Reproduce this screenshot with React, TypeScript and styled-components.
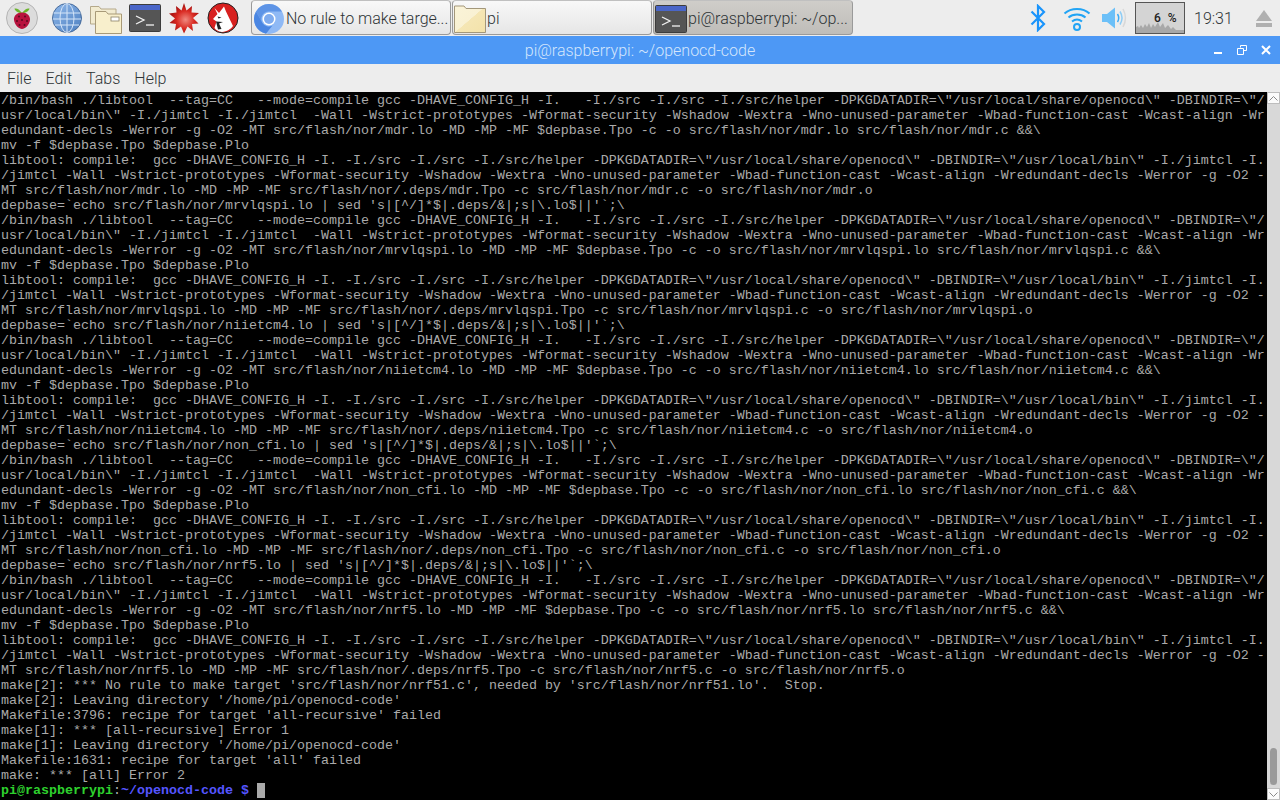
import React, { FC } from "react";
import styled, { createGlobalStyle } from "styled-components";

const GlobalStyle = createGlobalStyle`
  html, body {
    margin: 0;
    padding: 0;
    height: 100%;
    overflow: hidden;
    background: #000;
  }
`;

const COLS = 158;

const compileBlock = (name: string): string[] => {
    const src = `src/flash/nor/${name}`;
    return [
        `/bin/bash ./libtool  --tag=CC   --mode=compile gcc -DHAVE_CONFIG_H -I.   -I./src -I./src -I./src/helper -DPKGDATADIR=\\"/usr/local/share/openocd\\" -DBINDIR=\\"/usr/local/bin\\" -I./jimtcl -I./jimtcl  -Wall -Wstrict-prototypes -Wformat-security -Wshadow -Wextra -Wno-unused-parameter -Wbad-function-cast -Wcast-align -Wredundant-decls -Werror -g -O2 -MT ${src}.lo -MD -MP -MF $depbase.Tpo -c -o ${src}.lo ${src}.c &&\\`,
        `mv -f $depbase.Tpo $depbase.Plo`,
        `libtool: compile:  gcc -DHAVE_CONFIG_H -I. -I./src -I./src -I./src/helper -DPKGDATADIR=\\"/usr/local/share/openocd\\" -DBINDIR=\\"/usr/local/bin\\" -I./jimtcl -I./jimtcl -Wall -Wstrict-prototypes -Wformat-security -Wshadow -Wextra -Wno-unused-parameter -Wbad-function-cast -Wcast-align -Wredundant-decls -Werror -g -O2 -MT ${src}.lo -MD -MP -MF src/flash/nor/.deps/${name}.Tpo -c ${src}.c -o ${src}.o`,
    ];
};

const depbase = (name: string) => `depbase=\`echo src/flash/nor/${name}.lo | sed 's|[^/]*$|.deps/&|;s|\\.lo$||'\`;\\`;

const logical: string[] = [
    ...compileBlock("mdr"),
    depbase("mrvlqspi"),
    ...compileBlock("mrvlqspi"),
    depbase("niietcm4"),
    ...compileBlock("niietcm4"),
    depbase("non_cfi"),
    ...compileBlock("non_cfi"),
    depbase("nrf5"),
    ...compileBlock("nrf5"),
    `make[2]: *** No rule to make target 'src/flash/nor/nrf51.c', needed by 'src/flash/nor/nrf51.lo'.  Stop.`,
    `make[2]: Leaving directory '/home/pi/openocd-code'`,
    `Makefile:3796: recipe for target 'all-recursive' failed`,
    `make[1]: *** [all-recursive] Error 1`,
    `make[1]: Leaving directory '/home/pi/openocd-code'`,
    `Makefile:1631: recipe for target 'all' failed`,
    `make: *** [all] Error 2`,
];

// the terminal wraps hard at the column limit, mid word
const rows: string[] = logical.flatMap((line) => {
    const out: string[] = [];
    for (let i = 0; i < line.length; i += COLS) out.push(line.slice(i, i + COLS));
    return out;
});

const Raspberry: FC = () => (
    <svg width="32" height="32" viewBox="0 0 32 32">
        <circle cx="16" cy="16" r="15.500" fill="#dcdcdc" stroke="#b4b4b4" />
        <path d="M16 11C13 7 11 6 8.500 6.500C9 9 12 11 16 11ZM16 11C19 7 21 6 23.500 6.500C23 9 20 11 16 11Z" fill="#6cb52d" />
        <path d="M16 10.500C21 10.500 24.500 14 24 18C23.500 23 19 27 16 27C13 27 8.500 23 8 18C7.500 14 11 10.500 16 10.500Z" fill="#b8123e" />
        <g fill="#5a0a20">
            <circle cx="13" cy="14.500" r="1" />
            <circle cx="19" cy="14.500" r="1" />
            <circle cx="16" cy="18" r="1" />
            <circle cx="11" cy="19" r="1" />
            <circle cx="21" cy="19" r="1" />
            <circle cx="13.500" cy="23" r="1" />
            <circle cx="18.500" cy="23" r="1" />
        </g>
    </svg>
);

const Globe: FC = () => (
    <svg width="32" height="32" viewBox="0 0 32 32">
        <defs>
            <linearGradient id="globeFill" x1="0" y1="0" x2="1" y2="1">
                <stop offset="0" stopColor="#8fb8ea" />
                <stop offset="1" stopColor="#4d7fc0" />
            </linearGradient>
        </defs>
        <circle cx="16" cy="16" r="14.500" fill="url(#globeFill)" stroke="#4a6d9c" />
        <g fill="none" stroke="#d5e5f8" strokeWidth="1">
            <ellipse cx="16" cy="16" rx="7" ry="14.500" />
            <path d="M16 1.500V30.500M2.500 11H29.500M2 17H30M4 23H28" />
        </g>
    </svg>
);

const Folders: FC = () => (
    <svg width="32" height="32" viewBox="0 0 32 32">
        <path d="M0.500 4.500H9L11 7H26V22H0.500Z" fill="#f2ebd0" stroke="#b5a98a" />
        <path d="M5.500 13V31.500H31.500V12H18L16 9.500H5.500Z" fill="#f8efcc" stroke="#a89a78" />
        <rect x="21" y="15" width="8" height="4" fill="#fff" stroke="#8c8268" strokeWidth="0.800" />
    </svg>
);

const TermIcon: FC = () => (
    <svg width="32" height="28" viewBox="0 0 32 28">
        <rect x="0.500" y="0.500" width="31" height="27" rx="1" fill="#555" stroke="#3c3c3c" />
        <rect x="1" y="1" width="30" height="5" fill="#4a66c8" />
        <path d="M7 12L15 16L7 20" fill="none" stroke="#f2f2f2" strokeWidth="1.300" />
        <path d="M17 21H25" stroke="#f2f2f2" strokeWidth="1.300" />
    </svg>
);

const Spikey: FC = () => (
    <svg width="32" height="32" viewBox="0 0 32 32">
        <defs>
            <radialGradient id="spikeFill" cx="0.550" cy="0.550" r="0.500">
                <stop offset="0" stopColor="#f08a80" />
                <stop offset="0.600" stopColor="#d92a22" />
                <stop offset="1" stopColor="#a81210" />
            </radialGradient>
        </defs>
        <path d="M16 1L18.500 8.500L24 4L23.500 10.500L31 11L25 16L30.500 21.500L24 22L25 29L19.500 24.500L16 31.500L13 24.500L7 28.500L8 22L1.500 21L7 16.500L1 11.500L8.500 10.500L8 4L13.500 8.500Z" fill="url(#spikeFill)" />
    </svg>
);

const Wolf: FC = () => (
    <svg width="32" height="32" viewBox="0 0 32 32">
        <circle cx="16" cy="16" r="15" fill="#d8201f" stroke="#222" />
        <path d="M7.500 6L12 11L17 4.500L19 9.500L26 24C24 27 20 29.500 15 30C11 29.500 9 28 7.500 26L9.500 19.500L6 17L10.500 12Z" fill="#fff" />
        <path d="M10.500 14.500L14.500 15.500L11.500 16.500ZM9 19.500L16 20L12 21.500L14.500 27L11 27.500Z" fill="#222" />
    </svg>
);

const ChromeIcon: FC = () => (
    <svg width="32" height="32" viewBox="0 0 32 32">
        <circle cx="16" cy="16" r="15" fill="#8fb9f5" />
        <path d="M16 1A15 15 0 0 0 3 8.500L9.500 20A7.500 7.500 0 0 1 16 8.500H29A15 15 0 0 0 16 1Z" fill="#5e94e6" />
        <path d="M3 8.500A15 15 0 0 0 13 30.700L19.500 22.500A7.500 7.500 0 0 1 9.500 20Z" fill="#4a86e2" />
        <circle cx="16" cy="16" r="6.500" fill="#fff" />
        <circle cx="16" cy="16" r="5" fill="#7fabee" />
    </svg>
);

const FolderSingle: FC = () => (
    <svg width="32" height="28" viewBox="0 0 32 28">
        <defs>
            <linearGradient id="folderFill" x1="0" y1="0" x2="1" y2="1">
                <stop offset="0" stopColor="#faf3d8" />
                <stop offset="0.500" stopColor="#f9f1d3" />
                <stop offset="0.510" stopColor="#f5e6b4" />
                <stop offset="1" stopColor="#f3e2aa" />
            </linearGradient>
        </defs>
        <path d="M0.500 1H10L12 3.500H31.500V27.500H0.500Z" fill="url(#folderFill)" stroke="#a3977a" strokeLinejoin="round" />
    </svg>
);

const Bluetooth: FC = () => (
    <svg width="16" height="28" viewBox="0 0 16 28">
        <path d="M1.500 7.500L14 20L8 26V2L14 8L1.500 20.500" fill="none" stroke="#1a94fb" strokeWidth="2.200" />
    </svg>
);

const Wifi: FC = () => (
    <svg width="28" height="26" viewBox="0 0 28 26">
        <g fill="none" stroke="#22a4f5" strokeWidth="2">
            <path d="M1.500 8.500C8 2.500 20 2.500 26.500 8.500" />
            <path d="M5.500 12.500C10 8.500 18 8.500 22.500 12.500" />
            <path d="M9 16.500C12 14 16 14 19 16.500" />
            <circle cx="14" cy="22" r="3" />
        </g>
    </svg>
);

const Speaker: FC = () => (
    <svg width="28" height="26" viewBox="0 0 28 26">
        <path d="M1 9H6L14 2.500V23.500L6 17H1Z" fill="#6cc0f8" />
        <g fill="none" strokeWidth="1.500">
            <path d="M16.500 9C18 11.500 18 14.500 16.500 17" stroke="#3cabf5" />
            <path d="M19 6.500C21.500 10.500 21.500 15.500 19 19.500" stroke="#8fcdf5" />
            <path d="M22 4C25 9.500 25 16.500 22 22" stroke="#d8d8d8" />
        </g>
    </svg>
);

const CpuGraph: FC = () => (
    <GraphSvg viewBox="0 0 48 30" preserveAspectRatio="none">
        <path d="M0 30V24L2 23L3 25L5 22L7 25L9 21L11 24L13 20L15 25L17 21L19 24L22 19L24 24L27 20L29 25L32 22L35 26L37 24L40 27H48V30Z" fill="#a8a8a8" />
    </GraphSvg>
);

const ScrollChevron: FC<{ up?: boolean }> = ({ up }) => (
    <svg width="9" height="5" viewBox="0 0 9 5">
        <path d={up ? "M0.500 4.500L4.500 0.500L8.500 4.500" : "M0.500 0.500L4.500 4.500L8.500 0.500"} fill="none" stroke="#8a8a8a" />
    </svg>
);

const App: FC = () => {
    return (
        <Desktop>
            <GlobalStyle />
            <Panel>
                <Launchers>
                    <Launcher><Raspberry /></Launcher>
                    <Launcher><Globe /></Launcher>
                    <Launcher><Folders /></Launcher>
                    <Launcher><TermIcon /></Launcher>
                    <Launcher><Spikey /></Launcher>
                    <Launcher><Wolf /></Launcher>
                </Launchers>
                <TaskList>
                    <Task>
                        <ChromeIcon />
                        <TaskLabel>No rule to make targe...</TaskLabel>
                    </Task>
                    <Task>
                        <FolderSingle />
                        <TaskLabel>pi</TaskLabel>
                    </Task>
                    <Task $active>
                        <TermIcon />
                        <TaskLabel>pi@raspberrypi: ~/op...</TaskLabel>
                    </Task>
                </TaskList>
                <Tray>
                    <TrayIcon $width={16} $after={17}><Bluetooth /></TrayIcon>
                    <TrayIcon $width={28} $after={10}><Wifi /></TrayIcon>
                    <TrayIcon $width={28} $after={6}><Speaker /></TrayIcon>
                    <CpuMeter>
                        <CpuGraph />
                        <CpuText>6 %</CpuText>
                    </CpuMeter>
                    <Clock>19:31</Clock>
                    <Eject>
                        <EjectArrow />
                        <EjectBar />
                    </Eject>
                </Tray>
            </Panel>

            <TitleBar>
                <Title>pi@raspberrypi: ~/openocd-code</Title>
                <WindowButtons>
                    <svg width="10" height="10" viewBox="0 0 10 10">
                        <rect x="1" y="7" width="8" height="2" fill="#fff" />
                    </svg>
                    <svg width="10" height="10" viewBox="0 0 10 10">
                        <path d="M3.500 2.500V0.500H9.500V5.500H7M0.500 3.500H6.500V9.500H0.500Z" fill="none" stroke="#fff" />
                    </svg>
                    <svg width="10" height="10" viewBox="0 0 10 10">
                        <path d="M1 1L9 9M9 1L1 9" stroke="#fff" strokeWidth="2" />
                    </svg>
                </WindowButtons>
            </TitleBar>

            <MenuBar>
                <MenuItem>File</MenuItem>
                <MenuItem>Edit</MenuItem>
                <MenuItem>Tabs</MenuItem>
                <MenuItem>Help</MenuItem>
            </MenuBar>

            <Body>
                <Terminal>
                    {rows.map((row, i) => (
                        <Row key={i}>{row}</Row>
                    ))}
                    <Row>
                        <PromptUser>pi@raspberrypi</PromptUser>:<PromptPath>~/openocd-code $</PromptPath> <Cursor />
                    </Row>
                </Terminal>
                <Scrollbar>
                    <ScrollButton><ScrollChevron up /></ScrollButton>
                    <ScrollTrack>
                        <ScrollThumb />
                    </ScrollTrack>
                    <ScrollButton><ScrollChevron /></ScrollButton>
                </Scrollbar>
            </Body>
        </Desktop>
    );
};

export default App;

const Desktop = styled.div`
  width: 1280px;
  height: 800px;
  display: flex;
  flex-direction: column;
  overflow: hidden;
  font-family: Roboto, "Liberation Sans", sans-serif;
`;

const Panel = styled.div`
  height: 36px;
  flex: none;
  display: flex;
  align-items: flex-start;
  background: #ededed;
  color: #333;
`;

const Launchers = styled.div`
  display: flex;
  align-items: center;
  gap: 7px;
  height: 36px;
  padding-left: 6px;
  width: 251px;
  box-sizing: border-box;
`;

const Launcher = styled.div`
  width: 32px;
  height: 32px;
  flex: none;
  display: flex;
  align-items: center;

  &:first-child {
    margin-right: 6px;
  }
`;

const TaskList = styled.div`
  display: flex;
  gap: 1px;
  height: 35px;
`;

const Task = styled.div<{ $active?: boolean }>`
  width: 200px;
  height: 35px;
  box-sizing: border-box;
  display: flex;
  align-items: center;
  padding: 2px 0 0 1px;
  gap: 1px;
  border: 1px solid #9a9a9a;
  border-top-color: #c0c0c0;
  border-radius: 4px;
  background: ${(props) =>
        props.$active
            ? "linear-gradient(#cfcdc9, #bfbdb9)"
            : "linear-gradient(#f8f8f8, #e6e6e6)"};

  svg {
    flex: none;
  }
`;

const TaskLabel = styled.span`
  font-size: 16px;
  font-weight: 300;
  color: #2e3436;
  white-space: nowrap;
`;

const Tray = styled.div`
  margin-left: 177px;
  flex: 1;
  display: flex;
  align-items: center;
  height: 36px;
`;

const TrayIcon = styled.div<{ $width: number; $after: number }>`
  width: ${(props) => props.$width}px;
  height: 28px;
  display: flex;
  align-items: center;
  justify-content: center;
  margin-right: ${(props) => props.$after}px;
  flex: none;
`;

const CpuMeter = styled.div`
  position: relative;
  width: 50px;
  height: 32px;
  flex: none;
  box-sizing: border-box;
  border: 1px solid #555;
  background: #d4d4d4;
`;

const GraphSvg = styled.svg`
  display: block;
  width: 100%;
  height: 100%;
`;

const CpuText = styled.span`
  position: absolute;
  left: 18px;
  top: 8px;
  font-size: 12px;
  font-weight: 500;
  word-spacing: 4px;
  color: #222;
`;

const Clock = styled.span`
  margin-left: 9px;
  font-size: 16px;
  font-weight: 300;
  color: #2e3436;
  flex: none;
`;

const Eject = styled.div`
  display: flex;
  flex-direction: column;
  align-items: center;
  gap: 2px;
  width: 16px;
  margin-left: 23px;
  flex: none;
`;

const EjectArrow = styled.div`
  width: 0;
  height: 0;
  border-left: 8px solid transparent;
  border-right: 8px solid transparent;
  border-bottom: 11px solid #b0b0b0;
`;

const EjectBar = styled.div`
  width: 16px;
  height: 4px;
  background: #b0b0b0;
`;

const TitleBar = styled.div`
  position: relative;
  height: 28px;
  flex: none;
  display: flex;
  align-items: center;
  justify-content: center;
  background: #4d98f5;
`;

const Title = styled.span`
  font-size: 16px;
  font-weight: 300;
  color: #d4e6fc;
`;

const WindowButtons = styled.div`
  position: absolute;
  right: 9px;
  top: 9px;
  display: flex;
  gap: 14px;
  height: 10px;
`;

const MenuBar = styled.div`
  height: 28px;
  flex: none;
  display: flex;
  align-items: center;
  gap: 14px;
  padding-left: 7px;
  background: #ededed;
`;

const MenuItem = styled.span`
  font-size: 16px;
  font-weight: 300;
  color: #2e3436;
`;

const Body = styled.div`
  flex: 1;
  min-height: 0;
  display: flex;
  background: #000;
`;

const Terminal = styled.div`
  flex: 1;
  min-width: 0;
  padding: 1px 0 0 1px;
  font-family: "Liberation Mono", monospace;
  font-size: 13.333px;
  line-height: 15px;
  color: #aaa;
  overflow: hidden;
`;

const Row = styled.div`
  height: 15px;
  white-space: pre;
`;

const PromptUser = styled.span`
  color: #2ed12e;
  font-weight: 700;
`;

const PromptPath = styled.span`
  color: #5555ff;
  font-weight: 700;
`;

const Cursor = styled.span`
  display: inline-block;
  width: 8px;
  height: 15px;
  vertical-align: top;
  background: #aaa;
`;

const Scrollbar = styled.div`
  width: 13px;
  flex: none;
  display: flex;
  flex-direction: column;
  background: #d8d8d8;
`;

const ScrollButton = styled.div`
  height: 12px;
  flex: none;
  display: flex;
  align-items: center;
  justify-content: center;
  box-sizing: border-box;
  border: 1px solid #bdbdbd;
  background: #fbfbfb;
`;

const ScrollTrack = styled.div`
  flex: 1;
  display: flex;
  flex-direction: column;
  justify-content: flex-end;
  align-items: center;
  padding-bottom: 3px;
`;

const ScrollThumb = styled.div`
  width: 7px;
  height: 37px;
  border-radius: 4px;
  background: #9a9a9a;
`;
